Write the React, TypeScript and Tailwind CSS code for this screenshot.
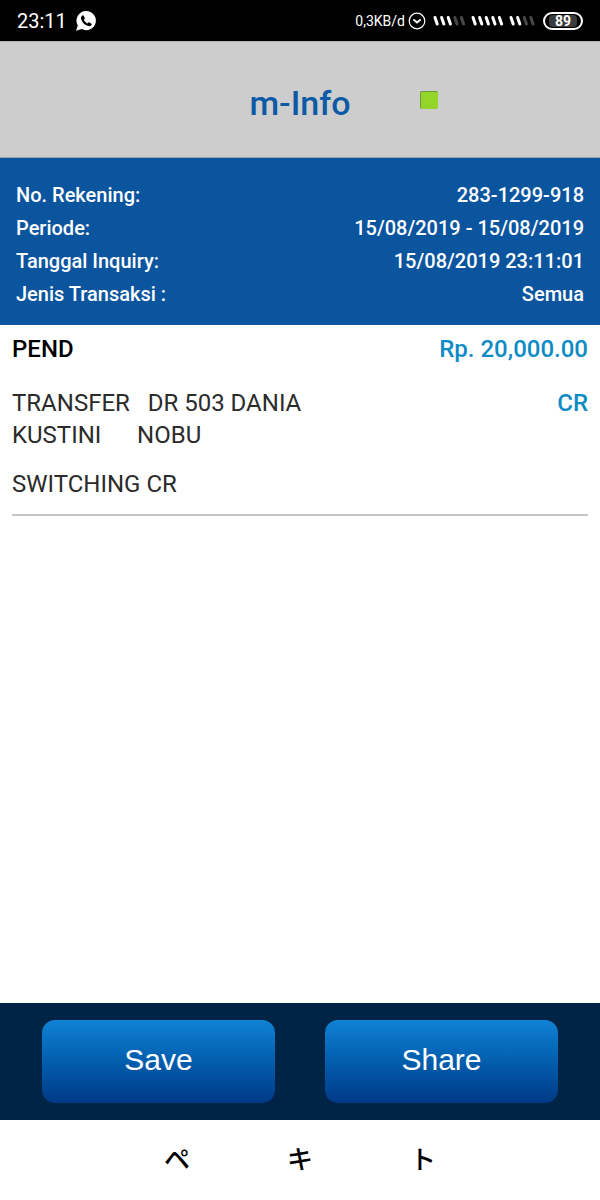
import { Fragment } from "react";

const details = [
  ["No. Rekening:", "283-1299-918"],
  ["Periode:", "15/08/2019 - 15/08/2019"],
  ["Tanggal Inquiry:", "15/08/2019 23:11:01"],
  ["Jenis Transaksi :", "Semua"],
];

const navKeys = ["ペ", "キ", "ト"];

function Signal({ on, total }: { on: number; total: number }) {
  const width = total === 5 ? 33 : 26;
  return (
    <svg width={width} height="12" viewBox={`0 0 ${width} 12`} aria-hidden="true">
      {Array.from({ length: total }, (_, i) => (
        <path
          key={i}
          d={`M${i * 6.6 + 2} 2.5L${i * 6.6 + 4.2} 9`}
          stroke={i < on ? "#fff" : "#484848"}
          strokeWidth="3"
          strokeLinecap="round"
        />
      ))}
    </svg>
  );
}

function StatusBar() {
  return (
    <div className="flex h-[41px] items-center bg-black px-[17px] text-white">
      <span className="text-[20px] leading-6">23:11</span>
      <svg className="ml-2" width="22" height="22" viewBox="0 0 22 22" aria-hidden="true">
        <path d="M11.3 1a9.6 9.6 0 1 1-4.5 18.1L1 20.8l1.8-5.4A9.6 9.6 0 0 1 11.3 1z" fill="#fff" />
        <path
          d="M7.2 5.7c.5-.5 1-.4 1.4.1l1.2 2c.3.5.1.9-.3 1.3l-.7.7c.8 1.6 2 2.8 3.6 3.6l.8-.8c.4-.4.8-.5 1.3-.2l1.9 1.3c.5.4.5.9.1 1.4-.8 1-2 1.4-3.3 1-3.6-1.1-6-3.5-7.1-7-.4-1.3 0-2.5 1.1-3.4z"
          fill="#000"
        />
      </svg>
      <span className="ml-auto text-[14px] leading-5">0,3KB/d</span>
      <svg className="ml-[3px]" width="18" height="18" viewBox="0 0 18 18" fill="none" stroke="#fff" aria-hidden="true">
        <circle cx="9" cy="9" r="7.8" strokeWidth="1.2" />
        <path d="M6 8l3 2.5L12 8" strokeWidth="2" strokeLinecap="round" strokeLinejoin="round" />
      </svg>
      <div className="ml-[7px] flex items-center gap-[5px]">
        <Signal on={3} total={5} />
        <Signal on={5} total={5} />
        <Signal on={2} total={4} />
      </div>
      <div className="ml-2 flex h-[18px] w-10 items-center justify-center rounded-full border-2 border-white">
        <span className="rounded-sm bg-[#3c3c3c] px-[6px] text-[14px] leading-3 font-bold">89</span>
      </div>
    </div>
  );
}

export default function App() {
  return (
    <div className="flex min-h-screen flex-col bg-white font-['Roboto','Noto_Sans_CJK_JP',sans-serif]">
      <StatusBar />

      <header className="grid h-[117px] grid-cols-[1fr_auto_1fr] items-center border-y border-t-[#b5b5b5] border-b-[#9aa3ad] bg-[#cdcdcd] pt-3 pb-1.5">
        <span />
        <h1 className="text-[34px] leading-10 font-medium text-[#0c5aa6]">m-Info</h1>
        <span className="mb-1.5 ml-[69px] size-[18px] rounded-xs border-t border-l border-[#6f9a3a] bg-[#93d629]" />
      </header>

      <dl className="grid grid-cols-[auto_1fr] bg-[#0b559f] px-4 pt-[21px] pb-[14px] text-[20px] leading-[33px] font-medium text-white">
        {details.map(([name, value]) => (
          <Fragment key={name}>
            <dt>{name}</dt>
            <dd className="text-right">{value}</dd>
          </Fragment>
        ))}
      </dl>

      <main className="flex-1 px-3 pt-2">
        <article className="border-b-2 border-[#c4c4c4] pb-[14px] text-[24px] leading-8 text-[#2b2b2b]">
          <div className="flex justify-between font-medium">
            <span className="text-black">PEND</span>
            <span className="text-[#0d8bc5]">Rp. 20,000.00</span>
          </div>
          <div className="mt-[22px] flex justify-between">
            <p className="whitespace-pre">{"TRANSFER   DR 503 DANIA\nKUSTINI      NOBU"}</p>
            <span className="font-medium text-[#0d8bc5]">CR</span>
          </div>
          <p className="mt-[17px]">SWITCHING CR</p>
        </article>
      </main>

      <footer className="grid grid-cols-2 gap-[50px] bg-[#002445] px-[42px] py-[17px] font-['Liberation_Sans',sans-serif] text-[30px] text-white">
        {["Save", "Share"].map((label) => (
          <button
            key={label}
            type="button"
            className="h-[83px] rounded-[13px] bg-linear-to-b from-[#1182d5] to-[#003a87] pb-1"
          >
            {label}
          </button>
        ))}
      </footer>

      <nav className="flex h-20 items-center justify-center gap-[97px] text-[26px] leading-8 font-medium text-black">
        {navKeys.map((glyph) => (
          <button key={glyph} type="button">
            {glyph}
          </button>
        ))}
      </nav>
    </div>
  );
}
